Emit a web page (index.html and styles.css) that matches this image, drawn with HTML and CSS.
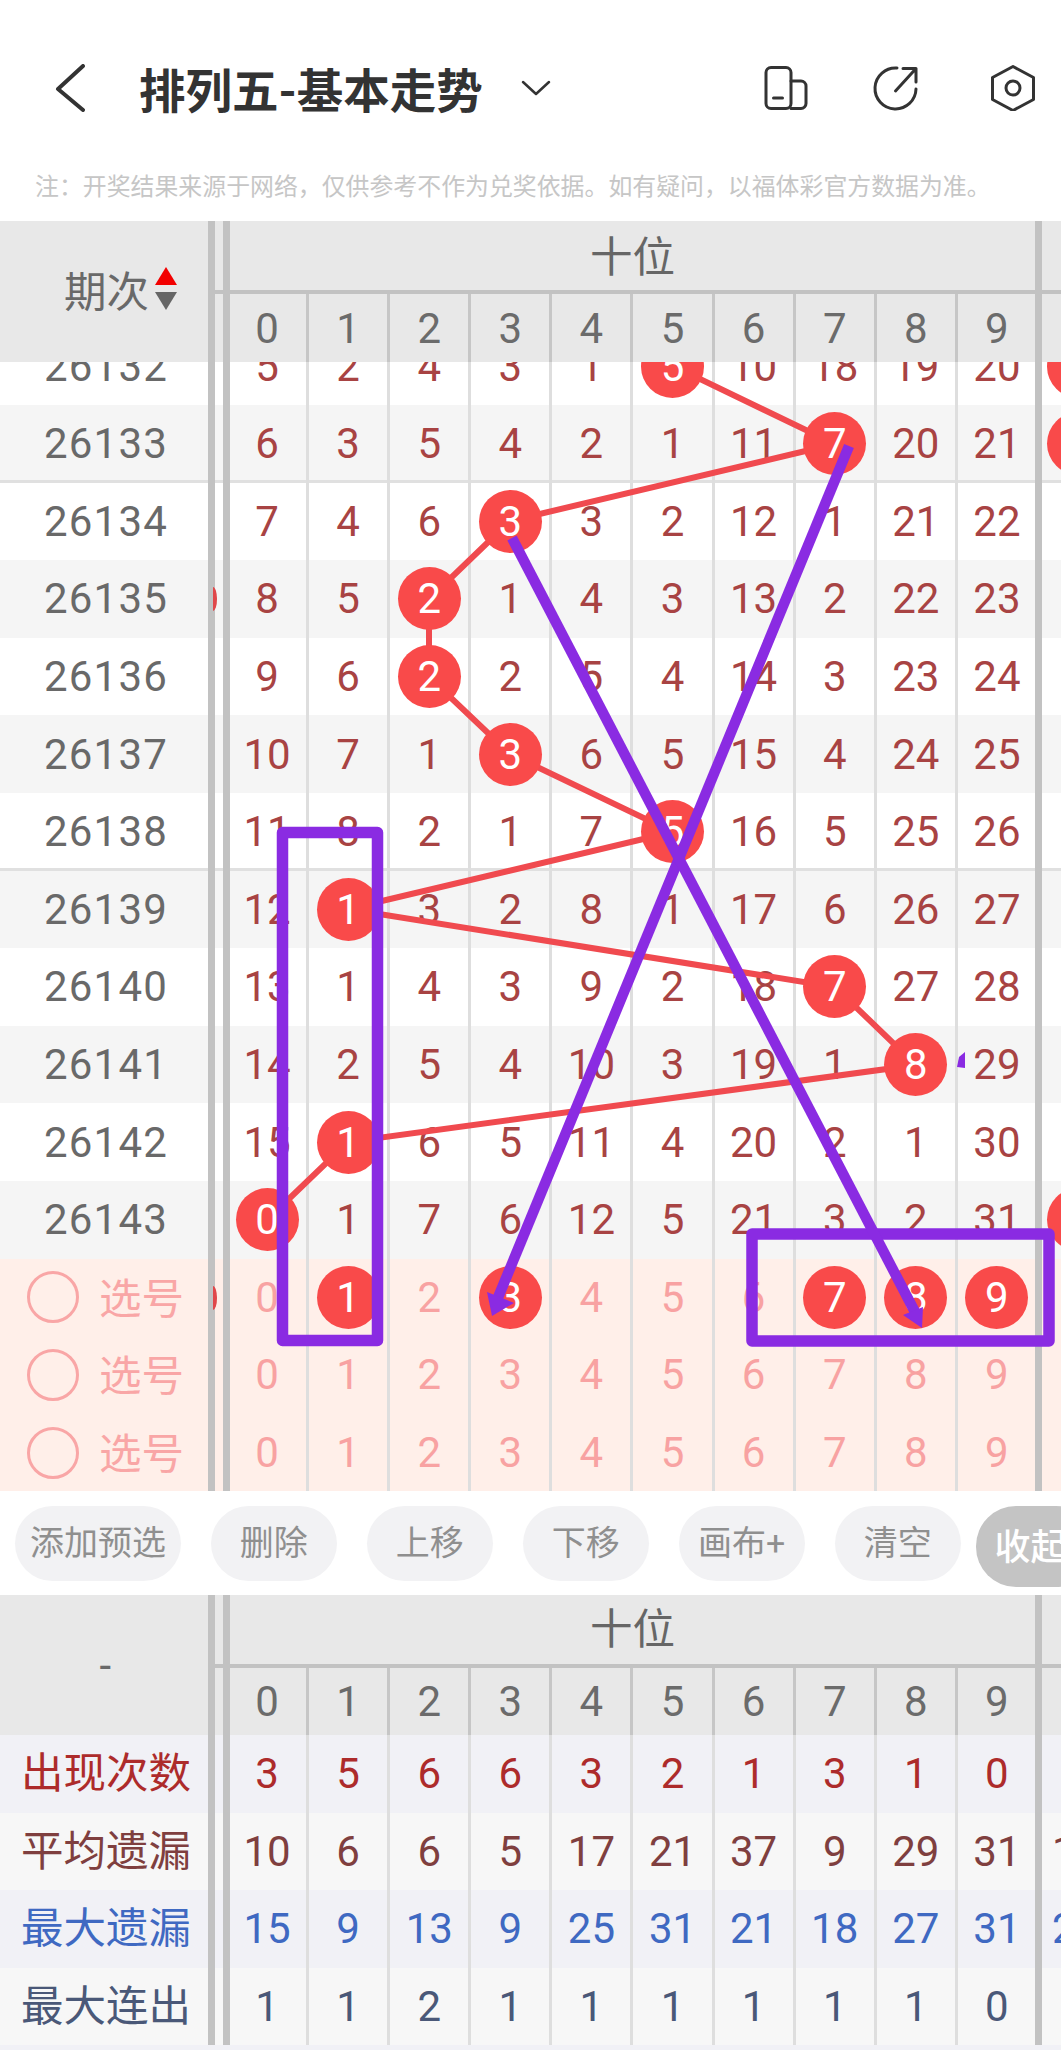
FILE: index.html
```html
<!DOCTYPE html>
<html lang="zh-CN">
<head>
    <meta charset="UTF-8">
    <title>排列五-基本走势</title>
    <link rel="stylesheet" href="styles.css">
</head>
<body>
<div class="page">
    <div class="topbar">
        <svg class="back" viewBox="0 0 30 48"><path d="M28 2 L3 25 L28 46"/></svg>
        <h1 class="title">排列五-基本走势</h1>
        <svg class="chevron" viewBox="0 0 30 16"><path d="M2 2 L15 14 L28 2"/></svg>
        <div class="actions">
            <svg class="icon" viewBox="0 0 44 46"><rect x="2" y="2.5" width="25" height="41" rx="5"/><path d="M27 16h10a5 5 0 0 1 5 5v17.500a5 5 0 0 1-5 5h-10M9.500 33h9"/></svg>
            <svg class="icon icon-wide" viewBox="0 0 46 46"><path d="M24 3A20.500 20.500 0 1 0 43 24M22.500 26L43 3.500M30 3.500H43V17"/></svg>
            <svg class="icon icon-wide icon-last" viewBox="0 0 46 46"><path d="M23 1.500L43.500 12.500V34.500L23 45.500L2.500 34.500V12.500Z"/><circle cx="23" cy="23" r="7"/></svg>
        </div>
    </div>
    <p class="note">注：开奖结果来源于网络，仅供参考不作为兑奖依据。如有疑问，以福体彩官方数据为准。</p>

    <div class="head">
        <div class="name sort">期次<span class="arrows"><i class="up"></i><i class="down"></i></span></div>
        <i class="bar"></i>
        <div class="head-right">
            <div class="head-top"><i class="gap"></i><i class="bar"></i><div class="head-title">十位</div><i class="bar"></i></div>
            <div class="head-line"></div>
            <div class="head-nums"><i class="gap"></i><i class="bar"></i><div class="cells"><span class="cell">0</span><span class="cell">1</span><span class="cell">2</span><span class="cell">3</span><span class="cell">4</span><span class="cell">5</span><span class="cell">6</span><span class="cell">7</span><span class="cell">8</span><span class="cell">9</span></div><i class="bar"></i></div>
        </div>
    </div>

    <div class="scroll">
        <svg class="trend" viewBox="0 362 1061 1129">
            <polyline points="620,326 673,366 835,444 510,521 429,599 429,677 510,754 673,832 348,909 835,987 916,1065 348,1142 267,1220"/>
        </svg>
        <div class="scroll-inner">
            <div class="row"><div class="name">26132</div><i class="bar"></i><i class="gap"></i><i class="bar"></i><div class="cells"><span class="cell">5</span><span class="cell">2</span><span class="cell">4</span><span class="cell">3</span><span class="cell">1</span><span class="cell"><b class="ball">5</b></span><span class="cell">10</span><span class="cell">18</span><span class="cell">19</span><span class="cell">20</span></div><i class="bar"></i><div class="next"><b class="ball"></b></div></div>
            <div class="row alt sep"><div class="name">26133</div><i class="bar"></i><i class="gap"></i><i class="bar"></i><div class="cells"><span class="cell">6</span><span class="cell">3</span><span class="cell">5</span><span class="cell">4</span><span class="cell">2</span><span class="cell">1</span><span class="cell">11</span><span class="cell"><b class="ball">7</b></span><span class="cell">20</span><span class="cell">21</span></div><i class="bar"></i><div class="next"><b class="ball"></b></div></div>
            <div class="row"><div class="name">26134</div><i class="bar"></i><i class="gap"></i><i class="bar"></i><div class="cells"><span class="cell">7</span><span class="cell">4</span><span class="cell">6</span><span class="cell"><b class="ball">3</b></span><span class="cell">3</span><span class="cell">2</span><span class="cell">12</span><span class="cell">1</span><span class="cell">21</span><span class="cell">22</span></div><i class="bar"></i><div class="next"></div></div>
            <div class="row alt"><div class="name">26135</div><i class="bar"></i><i class="gap"><i class="sliver"></i></i><i class="bar"></i><div class="cells"><span class="cell">8</span><span class="cell">5</span><span class="cell"><b class="ball">2</b></span><span class="cell">1</span><span class="cell">4</span><span class="cell">3</span><span class="cell">13</span><span class="cell">2</span><span class="cell">22</span><span class="cell">23</span></div><i class="bar"></i><div class="next"></div></div>
            <div class="row"><div class="name">26136</div><i class="bar"></i><i class="gap"></i><i class="bar"></i><div class="cells"><span class="cell">9</span><span class="cell">6</span><span class="cell"><b class="ball">2</b></span><span class="cell">2</span><span class="cell">5</span><span class="cell">4</span><span class="cell">14</span><span class="cell">3</span><span class="cell">23</span><span class="cell">24</span></div><i class="bar"></i><div class="next"></div></div>
            <div class="row alt"><div class="name">26137</div><i class="bar"></i><i class="gap"></i><i class="bar"></i><div class="cells"><span class="cell">10</span><span class="cell">7</span><span class="cell">1</span><span class="cell"><b class="ball">3</b></span><span class="cell">6</span><span class="cell">5</span><span class="cell">15</span><span class="cell">4</span><span class="cell">24</span><span class="cell">25</span></div><i class="bar"></i><div class="next"></div></div>
            <div class="row sep"><div class="name">26138</div><i class="bar"></i><i class="gap"></i><i class="bar"></i><div class="cells"><span class="cell">11</span><span class="cell">8</span><span class="cell">2</span><span class="cell">1</span><span class="cell">7</span><span class="cell"><b class="ball">5</b></span><span class="cell">16</span><span class="cell">5</span><span class="cell">25</span><span class="cell">26</span></div><i class="bar"></i><div class="next"></div></div>
            <div class="row alt"><div class="name">26139</div><i class="bar"></i><i class="gap"></i><i class="bar"></i><div class="cells"><span class="cell">12</span><span class="cell"><b class="ball">1</b></span><span class="cell">3</span><span class="cell">2</span><span class="cell">8</span><span class="cell">1</span><span class="cell">17</span><span class="cell">6</span><span class="cell">26</span><span class="cell">27</span></div><i class="bar"></i><div class="next"></div></div>
            <div class="row"><div class="name">26140</div><i class="bar"></i><i class="gap"></i><i class="bar"></i><div class="cells"><span class="cell">13</span><span class="cell">1</span><span class="cell">4</span><span class="cell">3</span><span class="cell">9</span><span class="cell">2</span><span class="cell">18</span><span class="cell"><b class="ball">7</b></span><span class="cell">27</span><span class="cell">28</span></div><i class="bar"></i><div class="next"></div></div>
            <div class="row alt"><div class="name">26141</div><i class="bar"></i><i class="gap"></i><i class="bar"></i><div class="cells"><span class="cell">14</span><span class="cell">2</span><span class="cell">5</span><span class="cell">4</span><span class="cell">10</span><span class="cell">3</span><span class="cell">19</span><span class="cell">1</span><span class="cell"><b class="ball">8</b></span><span class="cell">29</span></div><i class="bar"></i><div class="next"></div></div>
            <div class="row"><div class="name">26142</div><i class="bar"></i><i class="gap"></i><i class="bar"></i><div class="cells"><span class="cell">15</span><span class="cell"><b class="ball">1</b></span><span class="cell">6</span><span class="cell">5</span><span class="cell">11</span><span class="cell">4</span><span class="cell">20</span><span class="cell">2</span><span class="cell">1</span><span class="cell">30</span></div><i class="bar"></i><div class="next"></div></div>
            <div class="row alt"><div class="name">26143</div><i class="bar"></i><i class="gap"></i><i class="bar"></i><div class="cells"><span class="cell"><b class="ball">0</b></span><span class="cell">1</span><span class="cell">7</span><span class="cell">6</span><span class="cell">12</span><span class="cell">5</span><span class="cell">21</span><span class="cell">3</span><span class="cell">2</span><span class="cell">31</span></div><i class="bar"></i><div class="next"><b class="ball"></b></div></div>

            <div class="row pick"><div class="name"><i class="radio"></i>选号</div><i class="bar"></i><i class="gap"><i class="sliver"></i></i><i class="bar"></i><div class="cells"><span class="cell">0</span><span class="cell"><b class="ball">1</b></span><span class="cell">2</span><span class="cell"><b class="ball">3</b></span><span class="cell">4</span><span class="cell">5</span><span class="cell">6</span><span class="cell"><b class="ball">7</b></span><span class="cell"><b class="ball">8</b></span><span class="cell"><b class="ball">9</b></span></div><i class="bar"></i><div class="next"></div></div>
            <div class="row pick"><div class="name"><i class="radio"></i>选号</div><i class="bar"></i><i class="gap"></i><i class="bar"></i><div class="cells"><span class="cell">0</span><span class="cell">1</span><span class="cell">2</span><span class="cell">3</span><span class="cell">4</span><span class="cell">5</span><span class="cell">6</span><span class="cell">7</span><span class="cell">8</span><span class="cell">9</span></div><i class="bar"></i><div class="next"></div></div>
            <div class="row pick"><div class="name"><i class="radio"></i>选号</div><i class="bar"></i><i class="gap"></i><i class="bar"></i><div class="cells"><span class="cell">0</span><span class="cell">1</span><span class="cell">2</span><span class="cell">3</span><span class="cell">4</span><span class="cell">5</span><span class="cell">6</span><span class="cell">7</span><span class="cell">8</span><span class="cell">9</span></div><i class="bar"></i><div class="next"></div></div>
        </div>
    </div>

    <div class="toolbar">
        <button class="pill wide">添加预选</button>
        <button class="pill">删除</button>
        <button class="pill">上移</button>
        <button class="pill">下移</button>
        <button class="pill">画布+</button>
        <button class="pill">清空</button>
        <button class="pill fold">收起</button>
    </div>

    <div class="head head-stats">
        <div class="name">-</div>
        <i class="bar"></i>
        <div class="head-right">
            <div class="head-top"><i class="gap"></i><i class="bar"></i><div class="head-title">十位</div><i class="bar"></i></div>
            <div class="head-line"></div>
            <div class="head-nums"><i class="gap"></i><i class="bar"></i><div class="cells"><span class="cell">0</span><span class="cell">1</span><span class="cell">2</span><span class="cell">3</span><span class="cell">4</span><span class="cell">5</span><span class="cell">6</span><span class="cell">7</span><span class="cell">8</span><span class="cell">9</span></div><i class="bar"></i></div>
        </div>
    </div>
    <div class="row stat stat-count"><div class="name">出现次数</div><i class="bar"></i><i class="gap"></i><i class="bar"></i><div class="cells"><span class="cell">3</span><span class="cell">5</span><span class="cell">6</span><span class="cell">6</span><span class="cell">3</span><span class="cell">2</span><span class="cell">1</span><span class="cell">3</span><span class="cell">1</span><span class="cell">0</span></div><i class="bar"></i><div class="next"></div></div>
    <div class="row stat stat-avg"><div class="name">平均遗漏</div><i class="bar"></i><i class="gap"></i><i class="bar"></i><div class="cells"><span class="cell">10</span><span class="cell">6</span><span class="cell">6</span><span class="cell">5</span><span class="cell">17</span><span class="cell">21</span><span class="cell">37</span><span class="cell">9</span><span class="cell">29</span><span class="cell">31</span></div><i class="bar"></i><div class="next">1</div></div>
    <div class="row stat stat-max"><div class="name">最大遗漏</div><i class="bar"></i><i class="gap"></i><i class="bar"></i><div class="cells"><span class="cell">15</span><span class="cell">9</span><span class="cell">13</span><span class="cell">9</span><span class="cell">25</span><span class="cell">31</span><span class="cell">21</span><span class="cell">18</span><span class="cell">27</span><span class="cell">31</span></div><i class="bar"></i><div class="next">2</div></div>
    <div class="row stat stat-run"><div class="name">最大连出</div><i class="bar"></i><i class="gap"></i><i class="bar"></i><div class="cells"><span class="cell">1</span><span class="cell">1</span><span class="cell">2</span><span class="cell">1</span><span class="cell">1</span><span class="cell">1</span><span class="cell">1</span><span class="cell">1</span><span class="cell">1</span><span class="cell">0</span></div><i class="bar"></i><div class="next"></div></div>
    <div class="strip"></div>

    <!-- hand-drawn marks on top of the chart -->
    <svg class="marks" viewBox="0 0 1061 2050">
        <rect x="282.500" y="832.500" width="95" height="508"/>
        <rect x="752" y="1234" width="297" height="107"/>
        <line x1="849" y1="446" x2="497" y2="1300"/>
        <line x1="512" y1="538" x2="915" y2="1312"/>
        <polygon points="492,1316 487,1292 514,1303"/>
        <polygon points="922,1328 903,1315 923,1307"/>
        <polygon points="959,1057 965,1052 965,1068 957,1067"/>
    </svg>
</div>
</body>
</html>
```
FILE: styles.css
```css
* {
    box-sizing: border-box;
}
body {
    margin: 0;
    background: #ffffff;
    font-family: Roboto, "Noto Sans CJK SC", sans-serif;
}
.page {
    position: relative;
    width: 1061px;
    height: 2050px;
    overflow: hidden;
}

/* top bar */
.topbar {
    display: flex;
    align-items: center;
    height: 176px;
    padding: 0 25px 0 55px;
}
.back {
    width: 30px;
    height: 48px;
    fill: none;
    stroke: #333333;
    stroke-width: 4;
    stroke-linecap: round;
    stroke-linejoin: round;
}
.title {
    margin: 0 0 2px 54px;
    font-size: 46.500px;
    font-weight: 700;
    color: #333333;
}
.chevron {
    width: 30px;
    height: 16px;
    margin-left: 38px;
    fill: none;
    stroke: #333333;
    stroke-width: 2.5;
    stroke-linecap: round;
    stroke-linejoin: round;
}
.actions {
    display: flex;
    gap: 65px;
    margin-left: auto;
}
.icon {
    width: 44px;
    height: 46px;
    fill: none;
    stroke: #333333;
    stroke-width: 3;
    stroke-linecap: round;
    stroke-linejoin: round;
}
.icon-wide {
    width: 46px;
}
.icon-last {
    margin-left: 6px;
}
.note {
    height: 45px;
    margin: 0;
    padding-left: 35px;
    font-size: 23.900px;
    line-height: 22px;
    color: #c6c6c6;
}

/* shared table pieces */
.bar {
    position: relative;
    z-index: 1;
    flex: 0 0 7px;
    width: 7px;
    background: #c2c2c2;
}
.gap {
    position: relative;
    z-index: 3;
    flex: 0 0 8px;
    width: 8px;
}
.sliver {
    position: absolute;
    left: -2px;
    top: 27px;
    width: 4px;
    height: 24px;
    background: #e0474a;
    border-radius: 0 100% 100% 0 / 0 50% 50% 0;
}
.name {
    flex: 0 0 208px;
    display: flex;
    align-items: center;
    justify-content: center;
    padding-left: 4px;
    font-size: 42px;
    letter-spacing: 1.200px;
    color: #696969;
}
.cells {
    flex: 0 0 811px;
    display: flex;
    margin: 0 -4px 0 -2px;
}
.cell {
    flex: 0 0 81.100px;
    display: flex;
    align-items: center;
    justify-content: center;
    border-right: 3px solid #dedede;
    font-size: 42px;
    color: #a84343;
}
.cell:last-child {
    border-right: none;
    padding-right: 3px;
}

/* table header */
.head {
    display: flex;
    height: 141px;
    background: #e8e8e8;
}
.head-stats {
    height: 140px;
}
.sort {
    justify-content: flex-start;
    padding: 0 0 6px 64px;
    font-size: 42.500px;
    letter-spacing: 0;
}
.arrows {
    display: flex;
    flex-direction: column;
    gap: 7px;
    margin-left: 6px;
}
.up {
    width: 0;
    height: 0;
    border-left: 11px solid transparent;
    border-right: 11px solid transparent;
    border-bottom: 18px solid #f20000;
}
.down {
    width: 0;
    height: 0;
    border-left: 11px solid transparent;
    border-right: 11px solid transparent;
    border-top: 18px solid #666666;
}
.head-right {
    flex: 1;
    display: flex;
    flex-direction: column;
    min-width: 0;
}
.head-top {
    flex: 0 0 69px;
    display: flex;
}
.head-stats .head-top {
    flex-basis: 67px;
}
.head-title {
    flex: 0 0 805px;
    display: flex;
    align-items: center;
    justify-content: center;
    padding-bottom: 5px;
    font-size: 42.500px;
    color: #666666;
}
.head-stats .head-title {
    padding-bottom: 8px;
}
.head-line {
    flex: 0 0 4px;
    background: #c2c2c2;
}
.head-nums {
    flex: 1;
    display: flex;
}
.head-nums .cell {
    border-right-color: #c6c6c6;
    color: #6b6b6b;
}

/* scrolling body */
.scroll {
    position: relative;
    height: 1129px;
    overflow: hidden;
}
.scroll-inner {
    margin-top: -34.600px;
}
.trend {
    position: absolute;
    left: 0;
    top: 0;
    z-index: 1;
    width: 1061px;
    height: 1129px;
    fill: none;
    stroke: #f04a4f;
    stroke-width: 6;
}
.row {
    display: flex;
    height: 77.600px;
    background: #ffffff;
}
.alt {
    background: #f5f5f5;
}
.sep {
    box-shadow: inset 0 -3px #e0e0e0;
}
.next {
    flex: 1;
    min-width: 0;
    display: flex;
    align-items: center;
    overflow: hidden;
    padding-left: 5px;
    font-size: 42px;
}
.ball {
    position: relative;
    z-index: 2;
    flex: 0 0 63px;
    display: flex;
    align-items: center;
    justify-content: center;
    width: 63px;
    height: 63px;
    border-radius: 50%;
    background: #f94a4a;
    font-weight: 400;
    color: #ffffff;
}
.pick {
    background: #ffefe9;
}
.pick .name {
    justify-content: flex-start;
    padding: 0 0 4px 27px;
    font-size: 42.500px;
    letter-spacing: 0;
    color: #f9a6a6;
}
.radio {
    width: 52px;
    height: 52px;
    margin: 4px 20px 0 0;
    border: 3px solid #f9a6a6;
    border-radius: 50%;
}
.pick .cell {
    color: #f8a2a2;
}

/* buttons between the tables */
.toolbar {
    display: flex;
    align-items: flex-start;
    gap: 29.500px;
    height: 104px;
    padding: 15px 0 0 15px;
}
.pill {
    flex: 0 0 126.500px;
    height: 75px;
    padding: 0 0 6px;
    border: none;
    border-radius: 38px;
    background: #f2f2f4;
    font-family: inherit;
    font-size: 34px;
    color: #8f8f8f;
}
.wide {
    flex-basis: 166px;
}
.fold {
    flex-basis: 120px;
    height: 81px;
    margin-left: -15px;
    padding: 0 0 6px 19px;
    border-radius: 40px;
    background: #c4c4c4;
    font-size: 36px;
    font-weight: 500;
    color: #ffffff;
    text-align: left;
    white-space: nowrap;
}

/* stats table */
.stat {
    height: 77.500px;
    background: #f7f7f7;
}
.stat-count,
.stat-max {
    background: #f1f1f6;
}
.stat .name {
    padding-bottom: 8px;
    font-size: 42.500px;
    letter-spacing: 0;
}
.stat-count .name,
.stat-count .cell {
    color: #ad2b2b;
}
.stat-avg .name,
.stat-avg .cell,
.stat-avg .next {
    color: #7f3f3f;
}
.stat-max .name,
.stat-max .cell,
.stat-max .next {
    color: #3f69c2;
}
.stat-run .name,
.stat-run .cell {
    color: #4a5878;
}
.stat .next {
    padding-left: 10px;
}
.strip {
    height: 5px;
    background: #f1f1f6;
}

/* purple marks */
.marks {
    position: absolute;
    left: 0;
    top: 0;
    z-index: 5;
    width: 1061px;
    height: 2050px;
    pointer-events: none;
}
.marks rect {
    fill: none;
    stroke: #8a2be2;
    stroke-width: 11.500;
    stroke-linejoin: round;
}
.marks line {
    stroke: #8a2be2;
    stroke-width: 10.500;
}
.marks polygon {
    fill: #8a2be2;
}
```
